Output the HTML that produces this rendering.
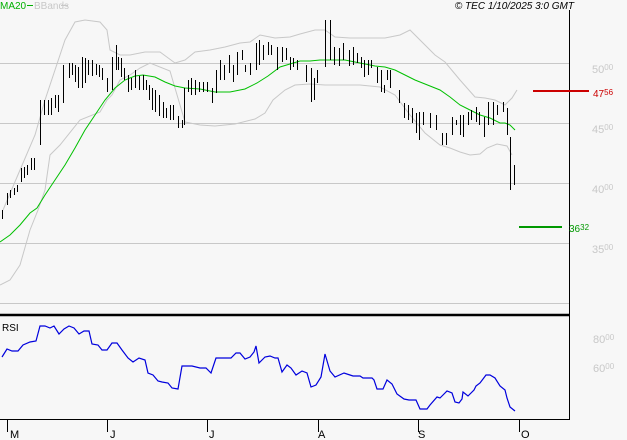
<!DOCTYPE html>
<html><head><meta charset="utf-8"><style>
html,body{margin:0;padding:0;background:#f7f7f7;}
svg{display:block}
text{font-family:"Liberation Sans",sans-serif}
</style></head><body>
<svg width="627" height="440" viewBox="0 0 627 440" xmlns="http://www.w3.org/2000/svg">
<rect width="627" height="440" fill="#f7f7f7"/>
<g stroke="#c8c8c8" stroke-width="1">
<line x1="0" y1="63.5" x2="569" y2="63.5"/>
<line x1="0" y1="123.5" x2="569" y2="123.5"/>
<line x1="0" y1="183.5" x2="569" y2="183.5"/>
<line x1="0" y1="243.5" x2="569" y2="243.5"/>
<line x1="0" y1="303.5" x2="569" y2="303.5"/>
</g>
<line x1="569.5" y1="10" x2="569.5" y2="420" stroke="#000"/>
<line x1="0" y1="315" x2="569" y2="315" stroke="#000" stroke-width="2.5"/>
<line x1="0" y1="419.5" x2="570" y2="419.5" stroke="#000"/>
<g stroke="#000"><line x1="7.5" y1="419" x2="7.5" y2="432"/><line x1="107.5" y1="419" x2="107.5" y2="432"/><line x1="207.5" y1="419" x2="207.5" y2="432"/><line x1="318.5" y1="419" x2="318.5" y2="432"/><line x1="418.5" y1="419" x2="418.5" y2="432"/><line x1="519.5" y1="419" x2="519.5" y2="432"/></g>
<g font-size="11" fill="#000"><text x="10" y="438">M</text><text x="110" y="438">J</text><text x="209" y="438">J</text><text x="318" y="438">A</text><text x="418" y="438">S</text><text x="521" y="438">O</text></g>
<!-- header -->
<text x="0" y="9" font-size="10" fill="#00b000">MA20</text>
<line x1="27" y1="5.5" x2="33" y2="5.5" stroke="#00b000"/>
<text x="34" y="9" font-size="10" fill="#c8c8c8">BBands</text>
<line x1="61" y1="5.5" x2="68" y2="5.5" stroke="#c8c8c8"/>
<text x="574" y="9" font-size="10" font-style="italic" fill="#000" text-anchor="end">© TEC 1/10/2025 3:0 GMT</text>
<!-- bands -->
<polyline fill="none" stroke="#c8c8c8" points="3,210 20,170 35,135 45,100 55,70 65,40 75,22 85,20 100,22 107,30 110,50 120,55 130,55 145,52 160,52 175,63 185,60 195,52 210,50 225,47 240,43 250,42 260,35 275,38 290,37 300,34 315,30 325,30 335,37 350,38 370,38 385,38 400,35 410,30 420,40 435,55 445,62 460,80 475,97 485,98 495,100 505,105 512,98 517,90"/>
<polyline fill="none" stroke="#c8c8c8" points="0,285 10,280 20,265 30,230 38,210 45,190 50,155 60,145 80,120 100,112 107,100 112,95 120,80 130,75 140,68 150,63 170,71 185,122 200,125 215,126 235,124 255,119 265,113 273,100 285,90 295,85 310,84 325,85 340,85 360,85 380,87 395,95 410,115 425,133 440,145 450,148 460,152 470,155 480,154 487,148 497,144 507,146 512,155"/>
<!-- MA20 -->
<polyline fill="none" stroke="#00c000" points="0,242 10,235 20,225 30,213 37,208 45,195 55,180 65,165 75,148 85,130 95,115 105,100 115,88 125,80 135,76 143,75 155,77 165,82 175,86 185,88 200,89 215,92 230,92 245,89 257,83 268,76 280,67 290,64 300,61 310,61 320,60 330,60 345,60 355,62 365,64 375,66 385,67 395,70 405,75 415,80 425,84 440,90 450,97 460,105 470,110 480,115 490,118 500,123 505,123 510,125 515,130"/>
<!-- bars -->
<path fill="none" stroke="#000" stroke-width="1" d="M2.5 210V219M7.5 193V205M10.5 190V198M14.5 188V195M17.5 185V192M21.5 168V182M24.5 167V178M27.5 165V175M31.5 158V170M34.5 158V170M40.5 100V145M44.5 100V115M48.5 100V115M51.5 98V115M55.5 95V108M58.5 95V112M63.5 65V103M69.5 63V78M72.5 63V75M75.5 65V82M78.5 67V88M82.5 57V88M85.5 58V83M88.5 60V75M92.5 60V76M96.5 64V75M99.5 65V77M102.5 68V80M107.5 78V92M112.5 57V90M116.5 45V70M118.5 57V70M121.5 58V77M124.5 68V80M128.5 75V92M131.5 78V90M135.5 70V88M139.5 76V90M143.5 75V90M146.5 80V90M149.5 85V100M152.5 88V110M155.5 90V112M159.5 95V116M163.5 102V118M166.5 108V118M170.5 105V120M173.5 105V120M178.5 116V128M182.5 120V128M184.5 88V125M188.5 80V92M191.5 78V95M195.5 80V95M199.5 82V92M203.5 82V92M207.5 82V92M212.5 88V103M216.5 70V93M220.5 60V80M224.5 65V80M229.5 55V73M233.5 65V82M237.5 52V75M242.5 50V60M245.5 65V72M250.5 63V75M256.5 43V70M259.5 40V65M263.5 45V60M268.5 42V55M271.5 45V55M277.5 47V70M282.5 47V62M286.5 48V60M290.5 57V70M293.5 58V67M297.5 60V70M306.5 65V82M311.5 68V102M314.5 78V100M317.5 70V83M325.5 20V67M330.5 20V60M334.5 47V65M339.5 48V66M343.5 43V60M349.5 50V66M353.5 47V65M357.5 53V63M361.5 57V68M364.5 60V77M368.5 60V75M371.5 60V68M377.5 67V83M381.5 70V92M384.5 85V93M387.5 70V80M390.5 70V88M399.5 90V103M404.5 103V118M408.5 105V120M412.5 108V123M416.5 113V133M419.5 112V140M423.5 112V125M430.5 113V128M436.5 115V130M442.5 133V145M446.5 133V145M452.5 117V135M456.5 120V125M460.5 115V135M463.5 115V137M468.5 112V125M471.5 110V120M476.5 107V122M479.5 112V125M484.5 117V137M488.5 102V125M493.5 102V125M497.5 105V115M503.5 102V112M507.5 108V135M510.5 137V190M514.5 165V185"/>
<!-- levels -->
<line x1="533" y1="91" x2="589" y2="91" stroke="#cc0000" stroke-width="2"/>
<text x="593" y="97" font-size="10" fill="#cc0000">47<tspan font-size="8" dy="-2">56</tspan></text>
<line x1="519" y1="227" x2="562" y2="227" stroke="#009900" stroke-width="2"/>
<text x="569" y="232" font-size="10" fill="#009900">36<tspan font-size="8" dy="-2">32</tspan></text>
<g font-size="11" fill="#c8c8c8">
<text x="592" y="73">50<tspan font-size="8" dy="-3">00</tspan></text>
<text x="592" y="133">45<tspan font-size="8" dy="-3">00</tspan></text>
<text x="592" y="193">40<tspan font-size="8" dy="-3">00</tspan></text>
<text x="592" y="253">35<tspan font-size="8" dy="-3">00</tspan></text>
<text x="593" y="343">80<tspan font-size="8" dy="-3">00</tspan></text>
<text x="593" y="372">60<tspan font-size="8" dy="-3">00</tspan></text>
</g>
<!-- RSI -->
<text x="2" y="331" font-size="10" fill="#000">RSI</text>
<polyline fill="none" stroke="#0000dd" stroke-width="1.2" points="2,357 7,349 12,351 18,351 23,345 30,342 36,341 40,326 45,326 50,328 54,326 59,334 64,329 69,326 74,328 79,334 84,331 89,331 92,344 98,345 102,350 107,350 112,343 117,343 122,350 128,358 133,362 139,358 145,360 148,373 153,375 158,381 162,382 168,383 172,388 178,389 182,366 192,366 200,368 206,368 211,373 216,358 231,358 236,353 240,353 245,359 250,357 254,352 256,346 259,363 265,357 270,356 275,358 278,358 282,372 287,365 291,368 296,375 302,371 307,373 311,387 316,385 321,377 325,354 330,371 335,377 344,373 350,375 353,376 360,376 363,378 372,378 374,380 377,389 383,389 387,380 392,384 397,394 404,399 409,400 416,400 420,409 427,409 430,405 437,397 440,398 443,395 447,391 452,393 455,402 459,403 462,399 463,392 468,396 474,390 476,386 480,383 486,375 490,375 495,378 500,386 505,390 507,398 510,407 515,411"/>
</svg>
</body></html>
